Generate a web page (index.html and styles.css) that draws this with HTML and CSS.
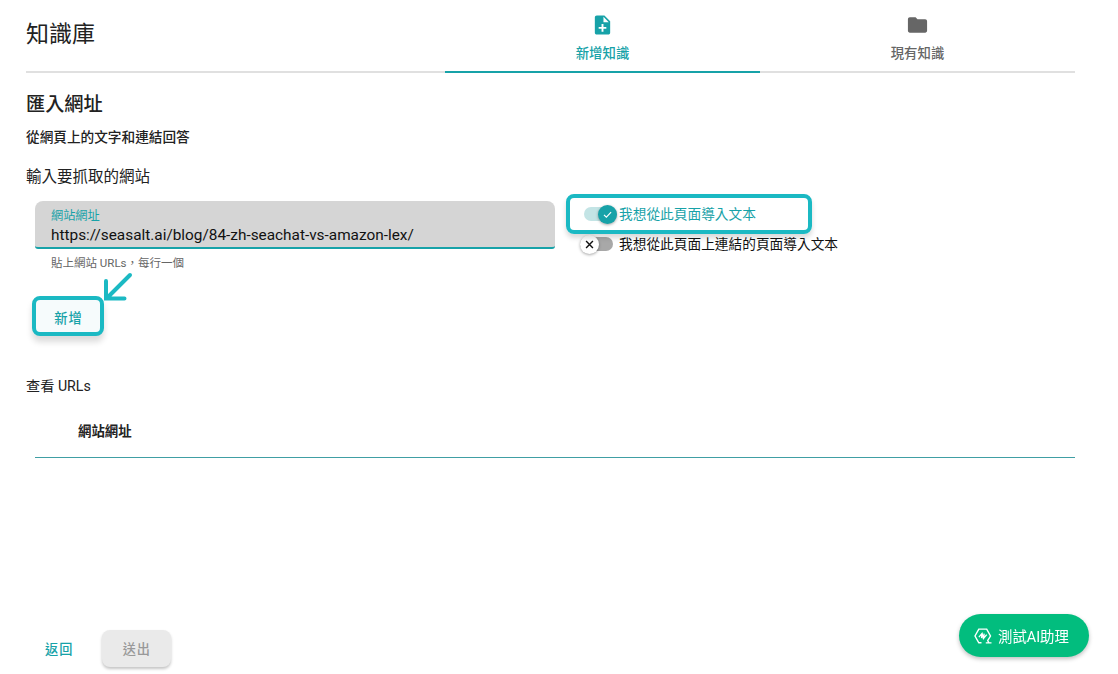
FILE: index.html
```html
<!DOCTYPE html>
<html lang="zh-Hant">
<head>
<meta charset="utf-8">
<title>知識庫</title>
<link rel="stylesheet" href="styles.css">
</head>
<body>
<main class="page">
  <header class="header">
    <h1 class="title">知識庫</h1>
    <nav class="tabs">
      <a class="tab tab-active">
        <svg class="tab-icon" viewBox="0 0 24 24"><path fill="currentColor" d="M14 2H6c-1.100 0-2 .9-2 2v16c0 1.100.9 2 2 2h12c1.100 0 2-.9 2-2V8l-6-6zm2 14h-3v3h-2v-3H8v-2h3v-3h2v3h3v2zm-3-7V3.500L18.500 9H13z"/></svg>
        <span>新增知識</span>
      </a>
      <a class="tab">
        <svg class="tab-icon" viewBox="0 0 24 24"><path fill="currentColor" d="M10 4H4c-1.100 0-2 .9-2 2v12c0 1.100.9 2 2 2h16c1.100 0 2-.9 2-2V8c0-1.100-.9-2-2-2h-8l-2-2z"/></svg>
        <span>現有知識</span>
      </a>
    </nav>
  </header>

  <section class="import">
    <h2 class="section-title">匯入網址</h2>
    <p class="section-sub">從網頁上的文字和連結回答</p>
    <p class="prompt">輸入要抓取的網站</p>
    <div class="form-row">
      <div class="field-col">
        <div class="field">
          <span class="field-label">網站網址</span>
          <span class="field-value">https://seasalt.ai/blog/84-zh-seachat-vs-amazon-lex/</span>
        </div>
        <p class="helper">貼上網站 URLs，每行一個</p>
      </div>
      <div class="toggles">
        <div class="toggle toggle-on">
          <span class="switch"><span class="knob"><svg viewBox="0 0 20 20"><path d="M6.300 10.300l2.500 2.500 5-5.200"/></svg></span></span>
          <span class="toggle-text">我想從此頁面導入文本</span>
        </div>
        <div class="toggle toggle-off">
          <span class="switch"><span class="knob"><svg viewBox="0 0 20 20"><path d="M6.400 6.400l7.200 7.200M13.600 6.400l-7.200 7.200"/></svg></span></span>
          <span class="toggle-text">我想從此頁面上連結的頁面導入文本</span>
        </div>
      </div>
    </div>
    <button class="add"><span class="add-text">新增</span>
      <svg class="arrow" viewBox="0 0 30 30"><path d="M27 3L4.500 25.500M3 9v17.500h18.500"/></svg>
    </button>
  </section>

  <section class="urls">
    <p class="urls-title">查看 URLs</p>
    <div class="urls-head">網站網址</div>
  </section>

  <footer class="footer">
    <button class="back">返回</button>
    <button class="submit">送出</button>
  </footer>
</main>
<button class="assistant">
  <svg class="assistant-icon" viewBox="0 0 18 18"><path d="M7.500 15.800H4.800L1 9l3.800-6.900h7.900L16.500 9l-2.800 4.600 1.200 2.200M11.800 15.900h5.700"/><path d="M4.900 10.100L8.100 6.300l1.300 5.200 3.300-3.900M8.100 6.300l-.6 4.800M10.200 6.600l-.8 4.900" stroke-width="1.300"/></svg>
  <span>測試AI助理</span>
</button>
</body>
</html>
```
FILE: styles.css
```css
* { box-sizing: border-box; }
body {
  margin: 0;
  height: 674px;
  overflow: hidden;
  background: #fff;
  color: #222;
  font-family: Roboto, "Noto Sans CJK TC", sans-serif;
}
h1, h2, p { margin: 0; }
button { border: 0; padding: 0; font-family: inherit; }

.page {
  display: flex;
  flex-direction: column;
  width: 1075px;
  height: 674px;
  padding-left: 26px;
}

.header {
  display: flex;
  flex: none;
  height: 73px;
  box-shadow: inset 0 -2px #e0e0e0;
}
.title {
  width: 419px;
  padding-top: 18px;
  font-size: 23px;
  line-height: 34px;
  font-weight: 400;
}
.tabs { display: flex; flex: 1; }
.tab {
  display: flex;
  flex: 1;
  flex-direction: column;
  align-items: center;
  padding-top: 13px;
  color: #666;
  font-size: 13.400px;
  line-height: 20px;
  font-weight: 500;
}
.tab-icon { width: 23px; height: 24px; margin-bottom: 7px; }
.tab-active { color: #17a2a8; border-bottom: 2px solid #17a2a8; }

.import { flex: none; height: 302px; }
.section-title {
  padding-top: 18px;
  font-size: 19.200px;
  line-height: 28px;
  font-weight: 500;
}
.section-sub {
  margin-top: 8px;
  font-size: 13.650px;
  line-height: 20px;
  font-weight: 500;
}
.prompt { margin-top: 18px; font-size: 15.500px; line-height: 24px; }
.form-row { display: flex; gap: 11px; margin: 12px 0 0 9px; }
.field-col { width: 520px; }
.field {
  display: flex;
  flex-direction: column;
  height: 48px;
  padding: 6px 16px 0;
  border-radius: 8px 8px 3px 3px;
  border-bottom: 2px solid #17a2a8;
  background: #d5d5d5;
}
.field-label { color: #17a2a8; font-size: 12.200px; line-height: 18px; }
.field-value { color: #111; font-size: 15.360px; line-height: 20px; }
.helper { margin: 4px 0 0 16px; color: #666; font-size: 11.500px; line-height: 20px; }

.toggles { margin-top: -7px; }
.toggle { display: flex; align-items: center; gap: 6px; font-size: 13.700px; line-height: 20px; }
.toggle-on {
  position: relative;
  width: 246px;
  height: 40px;
  padding-left: 14px;
  border: 4px solid #1bb9c3;
  border-radius: 8px;
  box-shadow: 0 4px 5px rgba(0, 0, 0, .15);
  color: #17a2a8;
}
.toggle-off { height: 20px; padding-left: 14px; color: #111; }
.switch { display: flex; align-items: center; width: 33px; height: 14px; border-radius: 7px; }
.knob {
  display: flex;
  flex: none;
  width: 19px;
  height: 19px;
  border-radius: 50%;
  box-shadow: 0 1px 3px rgba(0, 0, 0, .35);
}
.knob svg { width: 19px; height: 19px; fill: none; stroke: currentColor; stroke-width: 1.500; }
.toggle-on .switch { justify-content: flex-end; width: 33px; margin-right: -5px; background: #c3e4e5; }
.toggle-on .knob { background: #17a2a8; color: #fff; }
.toggle-on .toggle-text { padding-left: 1px; }
.toggle-on .knob svg { stroke-width: 1.200; }
.toggle-off .switch { background: #a8a8a8; }
.toggle-off .knob { background: #fff; }

.add {
  display: block;
  position: relative;
  width: 72px;
  height: 40px;
  margin: 23px 0 0 6px;
  padding: 2px 0 0 1px;
  border: 4px solid #1bb9c3;
  border-radius: 8px;
  background: #f6fbfc;
  box-shadow: 0 6px 6px rgba(0, 0, 0, .14);
  color: #17a2a8;
  font-size: 13.300px;
  font-weight: 500;
  letter-spacing: 1px;
}
.arrow {
  position: absolute;
  left: 67px;
  top: -28px;
  width: 30px;
  height: 30px;
  fill: none;
  stroke: #1bb9c3;
  stroke-width: 4;
  stroke-linecap: round;
}

.urls { flex: 1; }
.urls-title { font-size: 14.200px; line-height: 22px; }
.urls-head {
  height: 61px;
  margin-left: 9px;
  padding: 24px 0 0 43px;
  border-bottom: 1px solid #409fa4;
  font-size: 13.400px;
  line-height: 22px;
  font-weight: 700;
}

.footer { display: flex; flex: none; gap: 29px; height: 44px; padding-left: 19px; }
.back, .submit { height: 37px; font-size: 13.200px; font-weight: 500; letter-spacing: 1px; }
.back { background: none; color: #17a2a8; }
.submit {
  width: 69px;
  border-radius: 8px;
  background: #eaeaea;
  box-shadow: 0 2px 3px rgba(0, 0, 0, .23);
  color: #999;
}

.assistant {
  position: fixed;
  left: 959px;
  top: 614px;
  display: flex;
  align-items: center;
  gap: 6px;
  width: 130px;
  height: 43px;
  padding-left: 15px;
  border-radius: 22px;
  background: #02bd7e;
  box-shadow: 0 2px 4px rgba(0, 0, 0, .25);
  color: #fff;
  font-size: 14.400px;
}
.assistant-icon { width: 18px; height: 18px; fill: none; stroke: #fff; stroke-width: 1.400; }
```
